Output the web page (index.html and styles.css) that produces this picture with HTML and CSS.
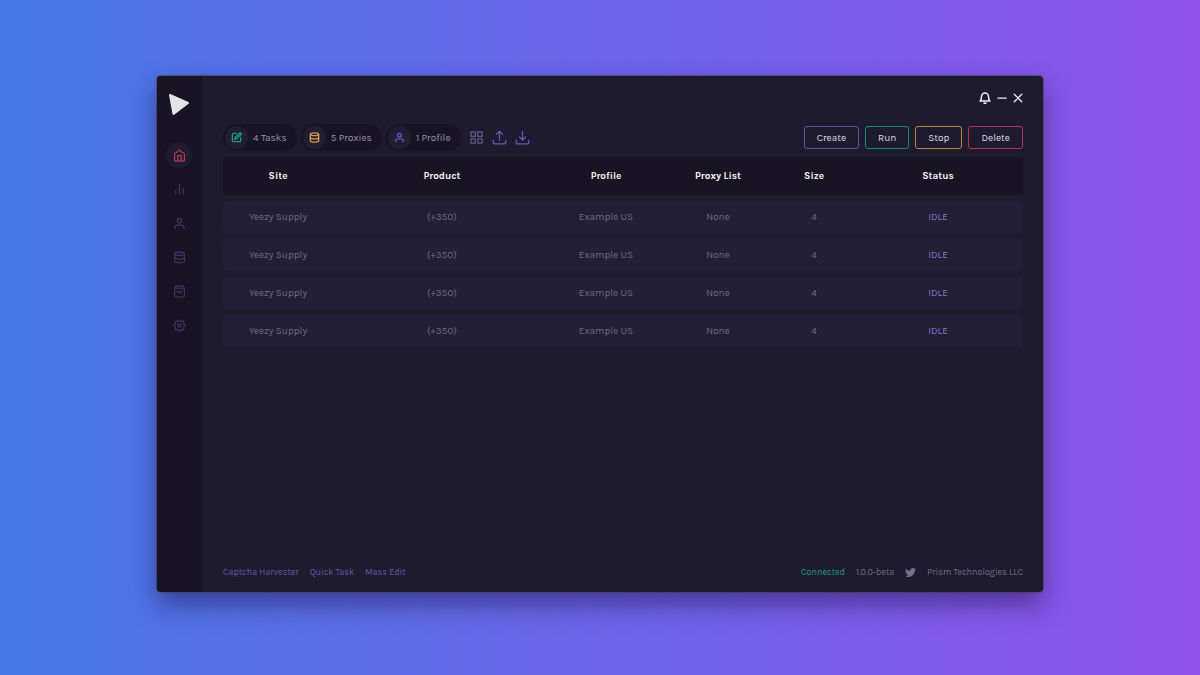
FILE: index.html
```html
<!DOCTYPE html>
<html lang="en">
<head>
<meta charset="utf-8">
<title>Prism</title>
<link rel="stylesheet" href="styles.css">
</head>
<body>
<svg class="sprite" aria-hidden="true">
    <symbol id="i-home" viewBox="0 0 24 24"><path d="M3 9l9-7 9 7v11a2 2 0 0 1-2 2H5a2 2 0 0 1-2-2z"/><path d="M9 22V12h6v10"/></symbol>
    <symbol id="i-chart" viewBox="0 0 24 24"><path d="M19 20V10M12 20V3M5 20v-6"/></symbol>
    <symbol id="i-user" viewBox="0 0 24 24"><path d="M20 21v-2a4 4 0 0 0-4-4H8a4 4 0 0 0-4 4v2"/><circle cx="12" cy="7" r="4"/></symbol>
    <symbol id="i-database" viewBox="0 0 24 24"><ellipse cx="12" cy="5" rx="9" ry="3"/><path d="M21 12c0 1.660-4 3-9 3s-9-1.340-9-3"/><path d="M3 5v14c0 1.660 4 3 9 3s9-1.340 9-3V5"/></symbol>
    <symbol id="i-bag" viewBox="0 0 24 24"><path d="M5 2L3 6v14a2 2 0 0 0 2 2h14a2 2 0 0 0 2-2V6l-2-4zM3 6h18"/><path d="M16 10a4 4 0 0 1-8 0"/></symbol>
    <symbol id="i-gear" viewBox="0 0 24 24"><path d="M12 1.500Q14.500 1.500 14.800 5.200Q17.600 2.800 19.400 4.600Q21.200 6.400 18.800 9.200Q22.500 9.500 22.500 12Q22.500 14.500 18.800 14.800Q21.200 17.600 19.400 19.400Q17.600 21.200 14.800 18.800Q14.500 22.500 12 22.500Q9.500 22.500 9.200 18.800Q6.400 21.200 4.600 19.400Q2.800 17.600 5.200 14.800Q1.500 14.500 1.500 12Q1.500 9.500 5.200 9.200Q2.800 6.400 4.600 4.600Q6.400 2.800 9.200 5.200Q9.500 1.500 12 1.500z"/><circle cx="12" cy="12" r="3"/></symbol>
    <symbol id="i-edit" viewBox="0 0 24 24"><path d="M12 3H5a2 2 0 0 0-2 2v14a2 2 0 0 0 2 2h14a2 2 0 0 0 2-2v-7"/><path d="M18.500 2.500a2.120 2.120 0 0 1 3 3L12 15l-4 1 1-4z"/></symbol>
    <symbol id="i-grid" viewBox="0 0 24 24"><path d="M3 3h7v7H3zM14 3h7v7h-7zM14 14h7v7h-7zM3 14h7v7H3z"/></symbol>
    <symbol id="i-upload" viewBox="0 0 24 24"><path d="M2 16v4a2 2 0 0 0 2 2h16a2 2 0 0 0 2-2v-4"/><path d="M17 7l-5-5-5 5M12 2v14"/></symbol>
    <symbol id="i-download" viewBox="0 0 24 24"><path d="M2 16v4a2 2 0 0 0 2 2h16a2 2 0 0 0 2-2v-4"/><path d="M7 11l5 5 5-5M12 16V2"/></symbol>
    <symbol id="i-bell" viewBox="0 0 24 24"><path d="M19 9A7 7 0 0 0 5 9c0 7-3 9-3 9h20s-3-2-3-9"/><path d="M13.730 22a2 2 0 0 1-3.460 0"/></symbol>
    <symbol id="i-minus" viewBox="0 0 24 24"><path d="M2 12h20"/></symbol>
    <symbol id="i-close" viewBox="0 0 24 24"><path d="M21 3L3 21M3 3l18 18"/></symbol>
    <symbol id="i-twitter" viewBox="0 0 24 24"><path d="M23.950 4.570a10 10 0 0 1-2.820.77 4.960 4.960 0 0 0 2.160-2.720c-.95.55-2 .95-3.130 1.180a4.920 4.920 0 0 0-8.380 4.480C7.690 8.090 4.070 6.130 1.640 3.160a4.820 4.820 0 0 0-.67 2.480c0 1.710.87 3.210 2.190 4.100a4.900 4.900 0 0 1-2.230-.62v.06a4.920 4.920 0 0 0 3.950 4.830 5 5 0 0 1-2.210.08 4.940 4.940 0 0 0 4.600 3.420A9.870 9.870 0 0 1 0 19.540a14 14 0 0 0 7.550 2.210c9.050 0 14-7.500 14-13.980 0-.21 0-.42-.02-.63a9.940 9.940 0 0 0 2.420-2.570z"/></symbol>
</svg>

<div class="window">
    <nav class="sidebar">
        <svg class="logo" viewBox="0 0 22 24"><path d="M2 3L20 11 5.500 22z"/></svg>
        <a class="nav-item active" href="#" aria-label="Home"><svg class="icon"><use href="#i-home"/></svg></a>
        <a class="nav-item" href="#" aria-label="Analytics"><svg class="icon"><use href="#i-chart"/></svg></a>
        <a class="nav-item" href="#" aria-label="Profiles"><svg class="icon"><use href="#i-user"/></svg></a>
        <a class="nav-item" href="#" aria-label="Proxies"><svg class="icon"><use href="#i-database"/></svg></a>
        <a class="nav-item" href="#" aria-label="Orders"><svg class="icon"><use href="#i-bag"/></svg></a>
        <a class="nav-item" href="#" aria-label="Settings"><svg class="icon"><use href="#i-gear"/></svg></a>
    </nav>

    <main class="main">
        <div class="titlebar">
            <button class="icon-btn bell" aria-label="Notifications"><svg class="icon"><use href="#i-bell"/></svg></button>
            <button class="icon-btn" aria-label="Minimize"><svg class="icon"><use href="#i-minus"/></svg></button>
            <button class="icon-btn" aria-label="Close"><svg class="icon"><use href="#i-close"/></svg></button>
        </div>

        <div class="toolbar">
            <div class="stats">
                <div class="pill"><span class="pill-icon green"><svg class="icon"><use href="#i-edit"/></svg></span>4 Tasks</div>
                <div class="pill"><span class="pill-icon orange"><svg class="icon"><use href="#i-database"/></svg></span>5 Proxies</div>
                <div class="pill"><span class="pill-icon purple"><svg class="icon"><use href="#i-user"/></svg></span>1 Profile</div>
            </div>
            <div class="tools">
                <button class="icon-btn muted" aria-label="Grid view"><svg class="icon"><use href="#i-grid"/></svg></button>
                <button class="icon-btn" aria-label="Export"><svg class="icon"><use href="#i-upload"/></svg></button>
                <button class="icon-btn" aria-label="Import"><svg class="icon"><use href="#i-download"/></svg></button>
            </div>
            <div class="actions">
                <button class="btn btn-create">Create</button>
                <button class="btn btn-run">Run</button>
                <button class="btn btn-stop">Stop</button>
                <button class="btn btn-delete">Delete</button>
            </div>
        </div>

        <table class="tasks">
            <colgroup>
                <col class="col-site"><col class="col-product"><col class="col-profile">
                <col class="col-proxy"><col class="col-size"><col class="col-status">
            </colgroup>
            <thead>
                <tr><th>Site</th><th>Product</th><th>Profile</th><th>Proxy List</th><th>Size</th><th>Status</th></tr>
            </thead>
            <tbody>
                <tr><td>Yeezy Supply</td><td>(+350)</td><td>Example US</td><td>None</td><td>4</td><td class="status">IDLE</td></tr>
                <tr><td>Yeezy Supply</td><td>(+350)</td><td>Example US</td><td>None</td><td>4</td><td class="status">IDLE</td></tr>
                <tr><td>Yeezy Supply</td><td>(+350)</td><td>Example US</td><td>None</td><td>4</td><td class="status">IDLE</td></tr>
                <tr><td>Yeezy Supply</td><td>(+350)</td><td>Example US</td><td>None</td><td>4</td><td class="status">IDLE</td></tr>
            </tbody>
        </table>

        <footer class="footer">
            <div class="footer-links">
                <a href="#">Captcha Harvester</a>
                <a href="#">Quick Task</a>
                <a href="#">Mass Edit</a>
            </div>
            <div class="footer-info">
                <span class="connected">Connected</span>
                <span>1.0.0-beta</span>
                <a class="twitter" href="#" aria-label="Twitter"><svg class="icon"><use href="#i-twitter"/></svg></a>
                <span>Prism Technologies LLC</span>
            </div>
        </footer>
    </main>
</div>
</body>
</html>
```
FILE: styles.css
```css
* {
    box-sizing: border-box;
}

body {
    display: flex;
    min-height: 100vh;
    margin: 0;
    padding: 76px 157px 83px;
    background: linear-gradient(90deg, #4678e6, #8f52ea);
    font-family: Karla, Inter, sans-serif;
    font-size: 10px;
    line-height: 16px;
    color: #77728f;
}

a {
    color: inherit;
    text-decoration: none;
}

button {
    padding: 0;
    border: 0;
    background: none;
    font: inherit;
    color: inherit;
    cursor: pointer;
}

.sprite {
    position: absolute;
    width: 0;
    height: 0;
}

.icon {
    display: block;
    width: 13px;
    height: 13px;
    fill: none;
    stroke: currentColor;
    stroke-width: 2;
    stroke-linecap: round;
    stroke-linejoin: round;
}

.window {
    display: flex;
    flex: 1;
    overflow: hidden;
    border-radius: 4px;
    background: #1f1b2e;
    box-shadow: 0 0 1px 1px rgba(70, 65, 90, .6), 0 12px 26px rgba(30, 15, 70, .5);
}

/* sidebar */

.sidebar {
    display: flex;
    flex-direction: column;
    align-items: center;
    gap: 8px;
    width: 45px;
    padding: 16px 1px 0 0;
    background: #181423;
}

.logo {
    width: 22px;
    height: 24px;
    margin-bottom: 18px;
    fill: #e4e3e5;
    stroke: #e4e3e5;
    stroke-width: 2;
    stroke-linejoin: round;
}

.nav-item {
    display: flex;
    align-items: center;
    justify-content: center;
    width: 26px;
    height: 26px;
    border-radius: 50%;
    color: #41376a;
}

.nav-item.active {
    background: #211b30;
    color: #d63d5c;
}

/* main */

.main {
    display: flex;
    flex: 1;
    flex-direction: column;
    padding: 16px 20px 12px 21px;
}

.titlebar {
    display: flex;
    align-items: center;
    justify-content: flex-end;
    gap: 6px;
    height: 12px;
    margin-bottom: 20px;
    color: #f0eff4;
}

.titlebar .icon {
    width: 10px;
    height: 10px;
    stroke-width: 3;
}

.titlebar .bell .icon {
    width: 12px;
    height: 12px;
}

.toolbar {
    display: flex;
    align-items: center;
    height: 27px;
}

.stats {
    display: flex;
    gap: 4px;
}

.pill {
    display: flex;
    align-items: center;
    gap: 5px;
    height: 27px;
    padding: 0 10px 0 2px;
    border-radius: 14px;
    background: #181423;
    color: #9690b0;
}

.pill-icon {
    display: flex;
    align-items: center;
    justify-content: center;
    width: 23px;
    height: 23px;
    border-radius: 50%;
    background: #211d33;
}

.pill-icon .icon {
    width: 11px;
    height: 11px;
    stroke-width: 3;
}

.green {
    color: #1d9b78;
}

.orange {
    color: #d99a52;
}

.purple {
    color: #6653b5;
}

.tools {
    display: flex;
    gap: 8px;
    margin-left: 8px;
    color: #6a57b5;
}

.tools .icon {
    width: 15px;
    height: 15px;
}

.tools .muted {
    color: #655b85;
}

.actions {
    display: flex;
    gap: 6px;
    margin-left: auto;
}

.btn {
    height: 23px;
    padding: 0 12px;
    border: 1px solid;
    border-radius: 3px;
    color: #dddae6;
}

.btn-create {
    border-color: #6a4fa3;
}

.btn-run {
    border-color: #17896c;
}

.btn-stop {
    border-color: #b98546;
}

.btn-delete {
    border-color: #b2344e;
}

/* tasks */

.tasks {
    width: 100%;
    table-layout: fixed;
    border-spacing: 0 6px;
    text-align: center;
}

.col-site,
.col-profile {
    width: 13.75%;
}

.col-product {
    width: 27.25%;
}

.col-proxy {
    width: 14.25%;
}

.col-size {
    width: 9.75%;
}

.col-status {
    width: 21.25%;
}

.tasks th {
    height: 38px;
    padding: 0;
    background: #181423;
    color: #f6f5f8;
}

.tasks td {
    height: 32px;
    padding: 0;
    background: #221f36;
    color: #6f6a84;
}

.tasks tr > :first-child {
    border-radius: 3px 0 0 3px;
}

.tasks tr > :last-child {
    border-radius: 0 3px 3px 0;
}

.tasks .status {
    color: #8377d0;
}

/* footer */

.footer {
    display: flex;
    justify-content: space-between;
    margin-top: auto;
    font-size: 9px;
}

.footer-links,
.footer-info {
    display: flex;
    align-items: center;
    gap: 11px;
}

.footer-links {
    color: #6556a8;
}

.footer-info {
    color: #6f6a84;
}

.connected {
    color: #1d9b78;
}

.twitter .icon {
    width: 11px;
    height: 11px;
    fill: #77728f;
    stroke: none;
}
```
